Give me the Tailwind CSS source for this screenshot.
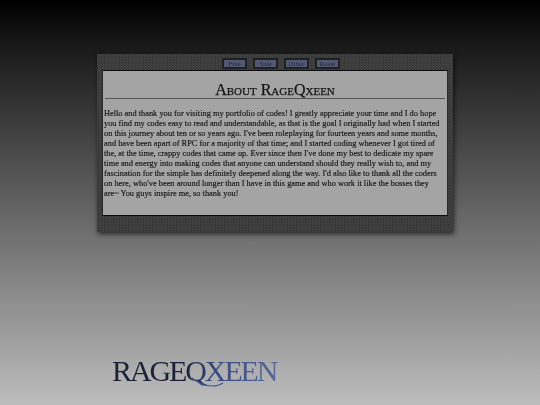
<!DOCTYPE html>
<html lang="en">

<head>
    <meta charset="UTF-8">
    <title>RageQxeen - About</title>
    <script src="https://cdn.jsdelivr.net/npm/@tailwindcss/browser@4"></script>
</head>

<body class="w-[540px] h-[405px] overflow-hidden bg-[linear-gradient(to_bottom,#000000_0%,#1a1a1a_12%,#6a6a6a_55%,#bdbdbd_100%)] font-['Liberation_Serif',serif]">

    <section class="ml-[97px] mt-[54px] w-[356px] h-[178px] px-[5px] bg-[repeating-conic-gradient(#383838_0_25%,#424242_0_50%)] bg-[length:3px_3px] shadow-[1px_2px_5px_rgba(0,0,0,0.65)]">

        <nav class="h-[16px] flex items-start gap-[6px] pt-[4px] pl-[120px] text-[7px] leading-[8px] text-[#23283c] opacity-[0.99]">
            <a class="w-[25px] h-[11px] text-center bg-[#525a72] border-2 border-[#1f2024]">Free</a>
            <a class="w-[25px] h-[11px] text-center bg-[#525a72] border-2 border-[#1f2024]">Sale</a>
            <a class="w-[25px] h-[11px] text-center bg-[#525a72] border-2 border-[#1f2024]">Other</a>
            <a class="w-[25px] h-[11px] text-center bg-[#525a72] border-2 border-[#1f2024]">Reset</a>
        </nav>

        <main class="h-[146px] bg-[#a6a6a6] border-t border-b border-t-[#0c0c0c] border-b-[#0c0c0c] border-x border-x-[#2a2a2a] px-[1px] text-[#141414] opacity-[0.99]">
            <h1 class="mx-[1px] h-[28px] pt-[10px] border-b border-[#555555] text-center text-[16px] leading-[17px] [font-variant:small-caps] [-webkit-text-stroke:0.25px_#141414]">About RageQxeen</h1>
            <p class="mt-[10px] text-[8.35px] leading-[10px] [-webkit-text-stroke:0.15px_#141414] whitespace-nowrap">
                Hello and thank you for visiting my portfolio of codes! I greatly appreciate your time and I do hope<br>
                you find my codes easy to read and understandable, as that is the goal I originally had when I started<br>
                on this journey about ten or so years ago. I've been roleplaying for fourteen years and some months,<br>
                and have been apart of RPC for a majority of that time; and I started coding whenever I got tired of<br>
                the, at the time, crappy codes that came up. Ever since then I've done my best to dedicate my spare<br>
                time and energy into making codes that anyone can understand should they really wish to, and my<br>
                fascination for the simple has definitely deepened along the way. I'd also like to thank all the coders<br>
                on here, who've been around longer than I have in this game and who work it like the bosses they<br>
                are~ You guys inspire me, so thank you!
            </p>
        </main>
    </section>

    <div class="relative ml-[112px] mt-[122px] w-[170px] h-[34px]">
        <span class="block text-[30px] leading-[34px] tracking-[-2.1px] whitespace-nowrap text-transparent bg-clip-text bg-[linear-gradient(90deg,#1a2238_0%,#1a2238_42%,#34497f_60%,#5a6c9c_100%)]">RAGEQXEEN</span>
        <svg class="absolute left-[76px] top-[22px]" width="40" height="12" viewBox="0 0 40 12" fill="none">
            <path d="M4 2 C10 7 18 10 24 10 C28 10 32 9 35 7" stroke="#3d5590" stroke-width="1.1" />
        </svg>
    </div>

</body>

</html>
